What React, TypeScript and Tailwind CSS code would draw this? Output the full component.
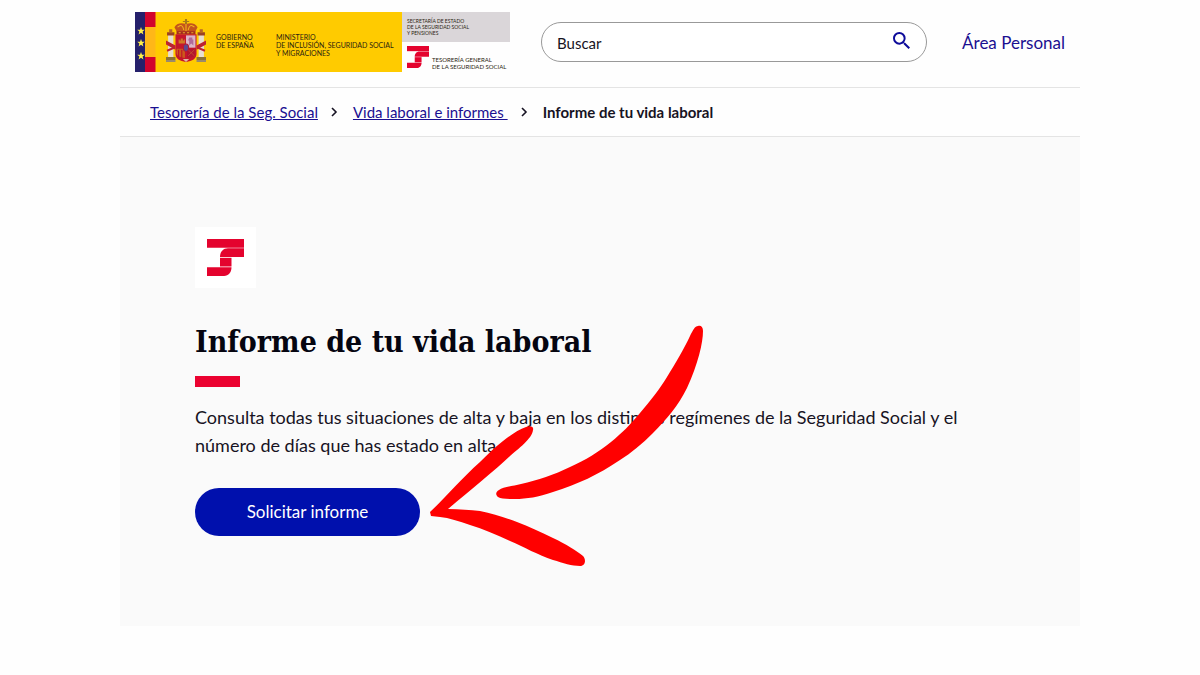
import React from "react";

function TgssMark({ className }: { className: string }) {
  return (
    <svg viewBox="0 0 37 37" className={className} fill="#e4032e" aria-hidden="true">
      <path d="M0 0H37V8.700H0Z" />
      <path d="M37 9.300V18H13C13 13 16 9.300 21 9.300Z" />
      <path d="M13 18.800H24.500V27.500H13Z" />
      <path d="M0 28.200H24.500C24.500 33 21.500 37 17 37H0Z" />
    </svg>
  );
}

function Flag() {
  return (
    <svg viewBox="0 0 21 60" className="h-15 w-[21px] shrink-0" aria-hidden="true">
      <rect width="21" height="60" fill="#ffcb00" />
      <rect width="10" height="60" fill="#25206b" />
      <rect x="10" width="10.500" height="15" fill="#d2042d" />
      <rect x="10" y="15" width="10.500" height="30" fill="#ffb718" />
      <rect x="10" y="45" width="10.500" height="15" fill="#d2042d" />
      {[19, 31, 44].map((y) => (
        <path
          key={y}
          transform={`translate(6 ${y})`}
          d="M0-4 1-1.200 3.800-1.200 1.600.6 2.400 3.400 0 1.700-2.400 3.400-1.600.6-3.800-1.200-1-1.200Z"
          fill="#fff04a"
        />
      ))}
    </svg>
  );
}

function CoatOfArms() {
  return (
    <svg viewBox="1 0 38 42" preserveAspectRatio="none" className="h-[43px] w-10 shrink-0" aria-hidden="true">
      <path d="M19 0h2v2h2v1h-2v2h-2V3h-2V2h2Z" fill="#a8781a" />
      <path d="M9 8c3-5 8-4 11-3 3-1 8-2 11 3l-3 6H12Z" fill="#c4541c" />
      <path d="M12 8c3-3 5-2 6 3M28 8c-3-3-5-2-6 3M20 5v7" stroke="#f3b51c" fill="none" />
      <path d="M11 12h18v3H11Z" fill="#a42b1e" />
      <path d="M13 13.500h14" stroke="#e9ad27" strokeDasharray="2 2" />
      <path d="M3 15h5v22H3ZM32 15h5v22h-5Z" fill="#e7ded2" />
      <path d="M2 13h7v3H2ZM31 13h7v3h-7Z" fill="#9b4322" />
      <path d="M4 10h3v3H4ZM33 10h3v3h-3Z" fill="#b8642a" />
      <path d="M1 37h9v3H1ZM30 37h9v3h-9Z" fill="#8a7134" />
      <path d="M1 40h9v2H1ZM30 40h9v2h-9Z" fill="#9a8a6c" />
      <path d="m1 21 9 5v4l-9-5ZM39 21l-9 5v4l9-5Z" fill="#bd2230" />
      <path d="m2 31 7-3M38 31l-7-3" stroke="#bd2230" strokeWidth="2" />
      <path d="M10 15h20v19c0 5-4 7-10 8-6-1-10-3-10-8Z" fill="#c5162c" />
      <path d="M20 16h9v12h-9Z" fill="#dcb5c8" />
      <path d="M23 18h3v2h1v6l-2-2-2 2v-5h-1Z" fill="#b06a9a" />
      <path d="M13 24v-4h1v1h1v-2h2v2h1v-1h1v4Z" fill="#cf7a26" />
      <path d="M11 29h8v9c-4 0-8-2-8-5Z" fill="#cc5a1c" />
      <path d="M13 30v7M16 30v8" stroke="#bd1228" />
      <path d="M21 29h8v5c0 3-4 4-8 4Z" fill="#b3162f" />
      <path d="m22 30 6 6m0-6-6 6" stroke="#c8602d" strokeWidth=".6" />
      <ellipse cx="20" cy="28" rx="2.500" ry="3.500" fill="#5a4a92" stroke="#b31b36" />
      <path d="M17 39h6l-3 3Z" fill="#deb8a0" />
    </svg>
  );
}

function BrandLogo() {
  return (
    <a href="#inicio" aria-label="Seguridad Social, inicio" className="flex h-15 w-[375px] shrink-0 text-[7px] leading-[8px] text-[#2b2410]">
      <Flag />
      <span className="flex w-[246px] shrink-0 bg-[#ffcb00] whitespace-nowrap">
        <span className="ml-[10px] flex pt-[7px]">
          <CoatOfArms />
        </span>
        <span className="ml-[10px] w-15 pt-[21px]">
          GOBIERNO
          <br />
          DE ESPAÑA
        </span>
        <span className="pt-[21px]">
          MINISTERIO
          <br />
          DE INCLUSIÓN, SEGURIDAD SOCIAL
          <br />Y MIGRACIONES
        </span>
      </span>
      <span className="flex flex-1 flex-col whitespace-nowrap">
        <span className="block h-[30px] bg-[#dad6d9] pt-[6px] pl-[5px] text-[5px] leading-[6px]">
          SECRETARÍA DE ESTADO
          <br />
          DE LA SEGURIDAD SOCIAL
          <br />Y PENSIONES
        </span>
        <span className="flex gap-[3px] pt-1 pl-[5px]">
          <TgssMark className="size-[22px] shrink-0" />
          <span className="pt-[10px] text-[6px] leading-[7px]">
            TESORERÍA GENERAL
            <br />
            DE LA SEGURIDAD SOCIAL
          </span>
        </span>
      </span>
    </a>
  );
}

function Chevron() {
  return (
    <svg viewBox="0 0 8 10" className="mr-[15px] ml-3 h-[10px] w-2 shrink-0" fill="none" stroke="#171323" strokeWidth="1.600" aria-hidden="true">
      <path d="m2 1 4 4-4 4" />
    </svg>
  );
}

function Arrow() {
  return (
    <svg
      viewBox="430 325 275 243"
      className="pointer-events-none absolute top-[188px] left-[310px] h-[243px] w-[275px]"
      fill="#ff0000"
      aria-hidden="true"
    >
      <path d="M698 326C701 325 703 327 703 331C703 343 698 364 687 388C678 406 667 419 653 433C642 444 631 453 620 460C598 475 578 484 553 492C538 497 527 499 515 499C507 499 501 499 498 497C495 494 496 492 499 490C503 487 513 486 521 484C538 480 554 475 570 467C586 460 598 452 611 442C622 433 630 425 640 413C651 400 659 390 667 377C675 364 684 349 690 336C693 330 695 326 698 326Z" />
      <path d="M430 512C447 496 461 479 480 462C488 454 495 447 503 441C511 435 519 429 526 427C531 425 534 427 533 430C532 439 518 449 510 456C494 471 473 488 448 509C460 509 470 510 480 511C493 514 504 517 517 522C530 527 541 532 553 538C566 544 577 551 583 556C586 559 586 566 580 566C572 566 563 563 553 560C538 555 524 547 510 541C497 535 483 529 470 525C459 521 449 518 440 517L431 516Z" />
    </svg>
  );
}

export default function App() {
  return (
    <div className="min-h-screen bg-[#fefefe] font-['Lato',sans-serif] text-[#171323]">
      <div className="mx-auto max-w-[960px]">
        <header className="flex items-start border-b border-[#e4e4e4] px-[15px] pt-3 pb-[15px]">
          <BrandLogo />
          <form
            role="search"
            onSubmit={(e) => e.preventDefault()}
            className="mt-[10px] ml-[31px] flex h-10 flex-1 items-center rounded-full border border-[#999] bg-white pr-4 pl-[15px]"
          >
            <input
              type="text"
              aria-label="Buscar"
              placeholder="Buscar"
              className="min-w-0 flex-1 bg-transparent pt-[2px] text-[15px] outline-none placeholder:text-[#171323] placeholder:opacity-100"
            />
            <button type="submit" aria-label="Buscar" className="mb-[3px] shrink-0">
              <svg viewBox="3 3 17.500 17.500" className="size-[17px]" fill="#0d0b9a" aria-hidden="true">
                <path d="M15.500 14h-.79l-.28-.27A6.471 6.471 0 0 0 16 9.500 6.500 6.500 0 1 0 9.500 16c1.610 0 3.090-.59 4.230-1.570l.27.28v.79l5 4.990L20.490 19l-4.990-5zm-6 0C7.010 14 5 11.990 5 9.500S7.010 5 9.500 5 14 7.010 14 9.500 11.990 14 9.500 14z" />
              </svg>
            </button>
          </form>
          <a href="#area-personal" className="mt-[19px] ml-[35px] shrink-0 text-[17px] leading-6 text-[#1a0f91]">
            Área Personal
          </a>
        </header>

        <nav aria-label="Ruta de navegación" className="border-b border-[#e4e4e4] px-[30px] py-3 text-[15px] leading-6">
          <ol className="flex items-center">
            <li className="flex items-center">
              <a href="#tesoreria" className="text-[#1a0f91] underline">Tesorería de la Seg. Social</a>
              <Chevron />
            </li>
            <li className="flex items-center">
              <a href="#vida-laboral" className="whitespace-pre text-[#1a0f91] underline">{"Vida laboral e informes "}</a>
              <Chevron />
            </li>
            <li aria-current="page" className="font-bold">Informe de tu vida laboral</li>
          </ol>
        </nav>

        <main className="relative bg-[#fafafa] px-[75px] py-[90px]">
          <div className="flex size-[61px] items-center justify-center bg-white">
            <TgssMark className="size-[37px]" />
          </div>
          <h1 className="mt-8 font-['DejaVu_Serif_Condensed','DejaVu_Serif',serif] text-[30px] leading-11 font-bold text-[#050510]">
            Informe de tu vida laboral
          </h1>
          <div className="mt-3 h-[11px] w-[45px] bg-[#eb0230]" />
          <p className="mt-4 text-[18px] leading-7">
            Consulta todas tus situaciones de alta y baja en los distintos regímenes de la Seguridad Social y el
            número de días que has estado en alta.
          </p>
          <button type="button" className="mt-[29px] block h-12 w-[225px] rounded-full bg-[#0010ad] text-[17px] text-white">
            Solicitar informe
          </button>
          <Arrow />
        </main>
      </div>
    </div>
  );
}
